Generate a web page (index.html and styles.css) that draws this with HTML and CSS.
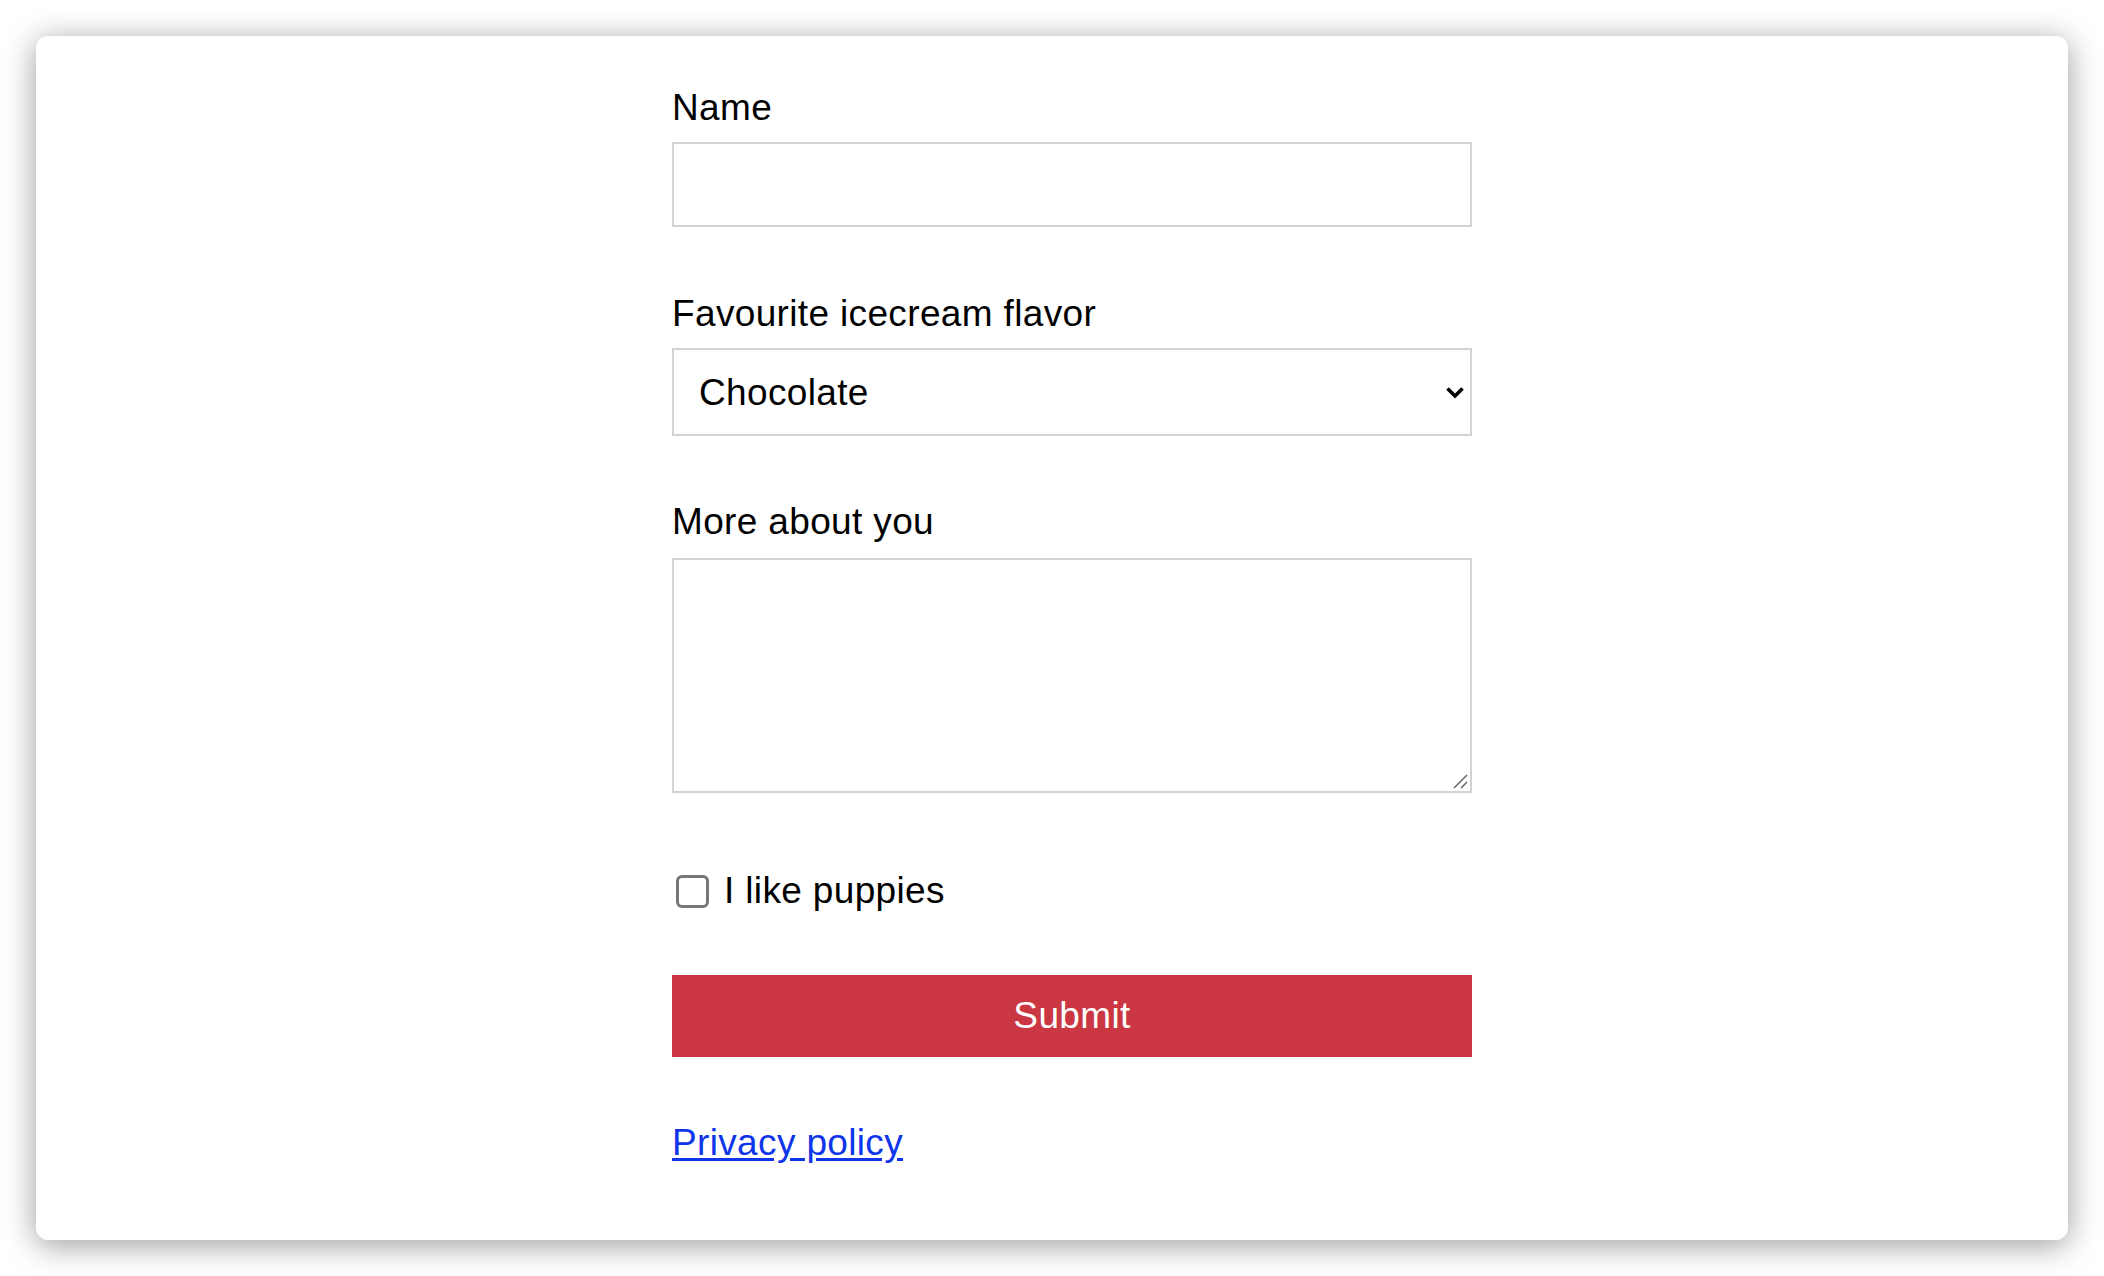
FILE: index.html
```html
<!DOCTYPE html>
<html lang="en">
<head>
<meta charset="utf-8">
<title>Form</title>
<link rel="stylesheet" href="styles.css">
</head>
<body>
<main class="card">
  <form class="form">
    <div class="field field-name">
      <label class="label" for="name">Name</label>
      <input class="control input" id="name" type="text">
    </div>
    <div class="field field-flavor">
      <label class="label" for="flavor">Favourite icecream flavor</label>
      <div class="select-wrap">
        <select class="control select" id="flavor">
          <option>Chocolate</option>
          <option>Vanilla</option>
          <option>Strawberry</option>
        </select>
        <svg class="chevron" width="20" height="13" viewBox="0 0 20 13" aria-hidden="true">
          <polyline points="2.5,2.5 10,10 17.5,2.5" fill="none" stroke="#000" stroke-width="3.6" stroke-linecap="butt" stroke-linejoin="miter"/>
        </svg>
      </div>
    </div>
    <div class="field field-about">
      <label class="label" for="about">More about you</label>
      <div class="textarea-wrap">
        <textarea class="control textarea" id="about"></textarea>
        <svg class="grip" width="16" height="16" viewBox="0 0 16 16" aria-hidden="true">
          <line x1="2" y1="15" x2="15" y2="2" stroke="#6b6b6b" stroke-width="1.6"/>
          <line x1="9" y1="15" x2="15" y2="9" stroke="#6b6b6b" stroke-width="1.6"/>
        </svg>
      </div>
    </div>
    <div class="check-row">
      <input class="checkbox" id="puppies" type="checkbox">
      <label class="check-label" for="puppies">I like puppies</label>
    </div>
    <button class="submit" type="button">Submit</button>
    <p class="links"><a class="link" href="#">Privacy policy</a></p>
  </form>
</main>
</body>
</html>
```
FILE: styles.css
```css
* {
  box-sizing: border-box;
}

html, body {
  margin: 0;
  padding: 0;
  background: #ffffff;
}

body {
  font-family: "Liberation Sans", Arial, sans-serif;
  font-size: 37px;
  line-height: 44px;
  letter-spacing: 0.35px;
  color: #000;
}

.card {
  margin: 36px;
  height: 1204px;
  background: #fff;
  border-radius: 12px;
  box-shadow: 0 5px 32px rgba(0, 0, 0, 0.4);
  padding: 50px 0 0 40px;
}

.form {
  width: 800px;
  margin: 0 auto;
  display: flex;
  flex-direction: column;
}

.field {
  display: flex;
  flex-direction: column;
  margin-bottom: 64px;
}

.label {
  display: block;
  height: 44px;
  margin-bottom: 13px;
}

.control {
  display: block;
  width: 100%;
  border: 2px solid #d3d3d3;
  border-radius: 0;
  background: #fff;
  font-family: "Liberation Sans", Arial, sans-serif;
  font-size: 37px;
  letter-spacing: 0.35px;
  color: #000;
  outline: none;
}

.field-name {
  margin-bottom: 65px;
}

.field-name .label {
  margin-bottom: 12px;
}

.input {
  height: 85px;
  padding: 0 25px;
}

.field-flavor .label {
  margin-bottom: 12px;
}

.select-wrap {
  position: relative;
}

.select {
  height: 88px;
  padding: 0 60px 0 25px;
  -webkit-appearance: none;
  appearance: none;
}

.chevron {
  position: absolute;
  right: 7px;
  top: 38px;
  pointer-events: none;
}

.field-about {
  margin-bottom: 76px;
}

.field-about .label {
  margin-bottom: 14px;
}

.textarea-wrap {
  position: relative;
}

.textarea {
  height: 235px;
  padding: 12px 25px;
  resize: none;
}

.grip {
  position: absolute;
  right: 4px;
  bottom: 4px;
  pointer-events: none;
}

.check-row {
  display: flex;
  align-items: center;
  height: 44px;
  margin-bottom: 62px;
}

.checkbox {
  -webkit-appearance: none;
  appearance: none;
  width: 33px;
  height: 33px;
  margin: 0 15px 0 4px;
  border: 3px solid #767676;
  border-radius: 6px;
  background: #fff;
}

.checkbox:checked {
  background: #0b57d0;
  border-color: #0b57d0;
}

.check-label {
  display: block;
}

.submit {
  display: block;
  width: 100%;
  height: 82px;
  border: none;
  border-radius: 0;
  background: #ca3642;
  color: #fff;
  font-family: "Liberation Sans", Arial, sans-serif;
  font-size: 37px;
  letter-spacing: 0.35px;
  padding: 0;
  margin: 0 0 64px 0;
  cursor: pointer;
}

.links {
  margin: 0;
  height: 44px;
}

.link {
  color: #0f35ea;
  text-decoration: underline;
  text-underline-offset: 3px;
}
```
